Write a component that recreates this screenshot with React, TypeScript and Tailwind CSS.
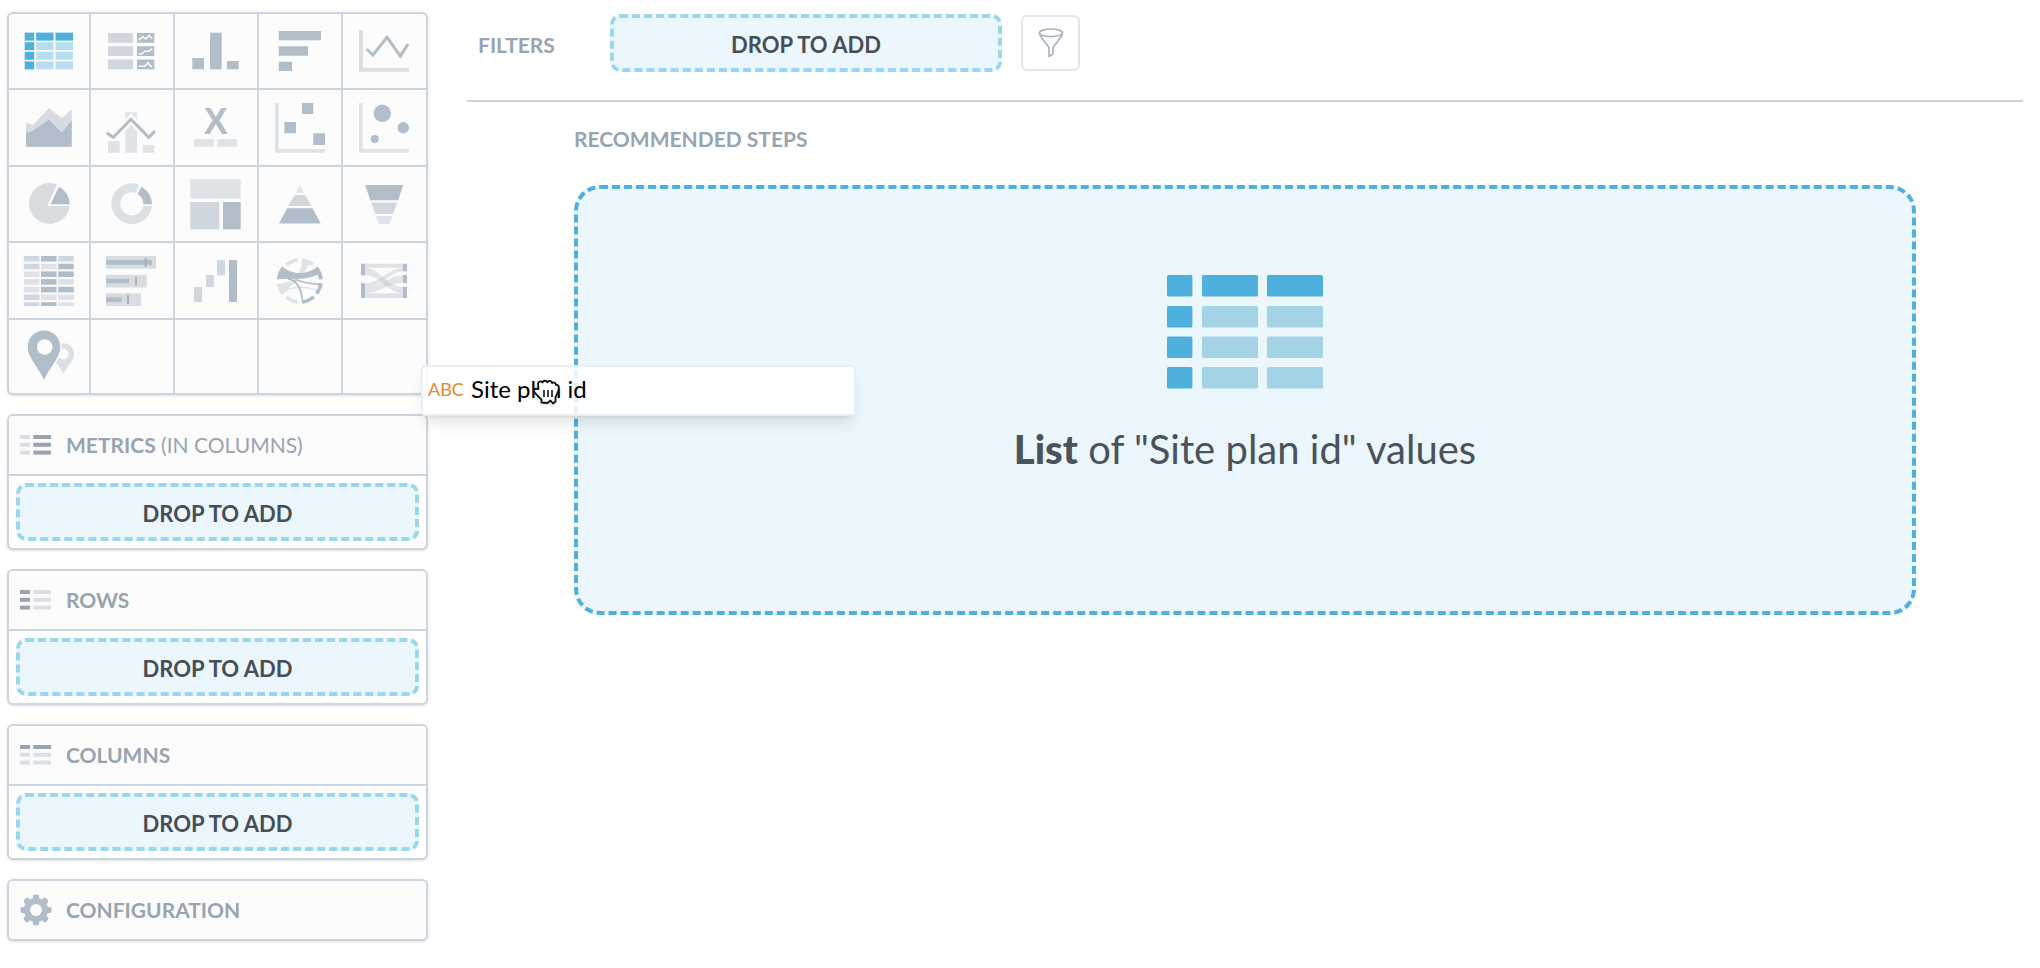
import type { ReactNode } from 'react'

const DARK = '#b1bdc8'
const MID = '#d0d7df'
const LIGHT = '#dfe3e7'
const GREY = '#d8dbe0'
const CELL = '#fcfcfc'

interface ChartType {
  name: string
  art?: ReactNode
}

const pivotRows = [
  [MID, DARK, MID],
  [MID, LIGHT, DARK],
  [LIGHT, DARK, DARK],
  [LIGHT, DARK, LIGHT],
  [LIGHT, DARK, DARK],
  [MID, LIGHT, LIGHT],
  [MID, DARK, LIGHT],
]

const chartTypes: ChartType[] = [
  {
    name: 'Table',
    art: (
      <>
        {[8.6, 18.2, 27.8, 37.4].map((y, i) => (
          <g key={y}>
            <rect x="1.7" y={y} width="9.5" height="8" fill="#4fb0de" />
            <rect x="13.2" y={y} width="17.3" height="8" fill={i === 0 ? '#4fb0de' : '#b7def0'} />
            <rect x="32.5" y={y} width="17.5" height="8" fill={i === 0 ? '#4fb0de' : '#b7def0'} />
          </g>
        ))}
      </>
    ),
  },
  {
    name: 'Sparkline table',
    art: (
      <>
        {[9, 22.2, 35.5].map((y) => (
          <g key={y}>
            <rect x="3" y={y} width="25" height="9.8" fill={MID} />
            <rect x="32" y={y} width="17.3" height="9.8" fill={DARK} />
          </g>
        ))}
        <g fill="none" stroke={CELL} strokeWidth="1.6">
          <path d="M33.7 16 38 12.7 40.7 15 44.3 11.4 47.3 14.8" />
          <path d="M33.7 30H36.5L39.7 27.2H44L47.3 24.5" />
          <path d="M33.7 42.2H39.7L43 38.7 45.5 42.2H47.3" />
        </g>
      </>
    ),
  },
  {
    name: 'Column chart',
    art: <path fill={DARK} d="M3.3 34H15V45.3H3.3zM21 8.7H32.7V45.3H21zM38 37H49.7V45.3H38z" />,
  },
  {
    name: 'Bar chart',
    art: <path fill={DARK} d="M5.7 7H48V16.3H5.7zM5.7 22.2H35V31.7H5.7zM5.7 37.7H19V47H5.7z" />,
  },
  {
    name: 'Line chart',
    art: (
      <>
        <path fill="#dbdfe4" d="M2 6H6V44H52V47.7H2z" />
        <path fill="none" stroke={DARK} strokeWidth="3" d="M9.7 25 16 31 30 13.3 43.3 32 51 20" />
      </>
    ),
  },
  {
    name: 'Area chart',
    art: (
      <>
        <path fill={GREY} d="M3 22.3 9.7 25.3 26 8.3 39 18 48.7 9.3V46.7H3z" />
        <path fill={DARK} d="M3 32.7 9.7 31 26 19.7 39 32.7 48.7 20.3V46.7H3z" />
      </>
    ),
  },
  {
    name: 'Combo chart',
    art: (
      <>
        <path fill={LIGHT} d="M3 41H14.7V52.7H3zM20.3 12.3H32V52.7H20.3zM37.7 45H49.3V52.7H37.7z" />
        <path fill="none" stroke={CELL} strokeWidth="8" d="M8.3 37.7 26 19.3 43.7 38" />
        <path fill="none" stroke={DARK} strokeWidth="3" d="M1.7 33 8.3 37.3 26 19.3 43.7 37.3 50 31" />
      </>
    ),
  },
  {
    name: 'Headline',
    art: (
      <>
        <text x="26.7" y="33.5" textAnchor="middle" fontSize="36" fill={DARK} className="font-['Liberation_Sans',sans-serif] font-bold">
          X
        </text>
        <path fill={LIGHT} d="M5 39H24.7V46.7H5zM28.3 39H47.7V46.7H28.3z" />
      </>
    ),
  },
  {
    name: 'Scatter plot',
    art: (
      <>
        <path fill={LIGHT} d="M2 3H5.7V49H52V52.7H2z" />
        <path fill={DARK} d="M29 3H40.3V14H29zM11.3 22H23V33.3H11.3zM40.3 33.3H52V45H40.3z" />
      </>
    ),
  },
  {
    name: 'Bubble chart',
    art: (
      <>
        <path fill={LIGHT} d="M2 3H5.7V49H52V52.7H2z" />
        <g fill={DARK}>
          <circle cx="25.3" cy="13.3" r="8.7" />
          <circle cx="46.3" cy="27.7" r="5.7" />
          <circle cx="17.7" cy="39" r="4" />
        </g>
      </>
    ),
  },
  {
    name: 'Pie chart',
    art: (
      <>
        <path fill={GREY} d="M24.3 29H46.6A20.4 20.4 0 1 1 33.9 7.5z" />
        <path fill={DARK} d="M27.5 27.3 36 9.7A20.4 20.4 0 0 1 46.7 27.3z" />
      </>
    ),
  },
  {
    name: 'Donut chart',
    art: (
      <>
        <path fill="#dbe0e5" d="M47 29A20.4 20.4 0 1 1 34 7.6L31 16A11.6 11.6 0 1 0 38.2 29z" />
        <path fill={DARK} d="M47 27.3A20.4 20.4 0 0 0 36.3 9.8L32.7 17A11.6 11.6 0 0 1 38.4 27.3z" />
      </>
    ),
  },
  {
    name: 'Treemap',
    art: (
      <>
        <rect x="1.3" y="2" width="50.4" height="19.7" fill={LIGHT} />
        <rect x="1.3" y="25" width="29" height="27.3" fill={MID} />
        <rect x="34" y="25" width="17.7" height="27.3" fill={DARK} />
      </>
    ),
  },
  {
    name: 'Pyramid chart',
    art: (
      <>
        <path fill={LIGHT} d="M26.7 8.3 31 15.7H22.7z" />
        <path fill={MID} d="M21.7 18H32.3L38.3 29H15.3z" />
        <path fill={DARK} d="M14.2 31.3H39.5L47.7 46.5H6z" />
      </>
    ),
  },
  {
    name: 'Funnel chart',
    art: (
      <>
        <path fill={DARK} d="M8 8H46.3L41 23.3H13.4z" />
        <path fill={MID} d="M14.2 25.5H40.2L36 37H18.3z" />
        <path fill={LIGHT} d="M19 39H35.3L32.5 46.7H21.7z" />
      </>
    ),
  },
  {
    name: 'Heatmap',
    art: (
      <>
        {pivotRows.map((row, i) => (
          <g key={i}>
            {row.map((fill, j) => (
              <rect key={j} x={0.8 + j * 17.2} y={3 + i * 7.7} width="15.6" height={i === 6 ? 3.8 : 5.6} fill={fill} />
            ))}
          </g>
        ))}
      </>
    ),
  },
  {
    name: 'Bullet chart',
    art: (
      <>
        <path fill={GREY} d="M1 3H51V15.7H1zM1 21.7H41.7V34.4H1zM1 40.3H36V53H1z" />
        <path fill={DARK} d="M1 7H47V11.7H1zM1 25.7H24.3V30.3H1zM1 44.3H16.7V49H1z" />
        <path fill="#a3b0bd" d="M39.7 5H41.7V13.7H39.7zM30 23.7H32V32.3H30zM22 42.3H24V51H22z" />
      </>
    ),
  },
  {
    name: 'Waterfall chart',
    art: (
      <>
        <path fill={MID} d="M5 34H13V49H5zM17 22H25V34H17zM28 7H36V22.3H28z" />
        <rect x="40" y="7" width="8" height="42" fill={DARK} />
      </>
    ),
  },
  {
    name: 'Dependency wheel',
    art: (
      <>
        <g fill="none" stroke={LIGHT} strokeWidth="3.4">
          <path d="M13.5 12A21.3 21.3 0 0 1 25 6.8" />
          <path d="M13.5 44A21.3 21.3 0 0 0 25 49.2" />
        </g>
        <path fill={LIGHT} d="M28.7 5A23 23 0 0 1 41 10.3L38.8 13A18 18 0 0 0 36 11.4Q31.5 16 31 23L23.5 22.5Q29 16 28.7 9z" />
        <path fill={LIGHT} d="M4 30.5Q14 30.2 25 26.5 17 34 9 42A23 23 0 0 1 4 30.5z" />
        <path fill="none" stroke={LIGHT} strokeWidth="1.6" d="M10 39Q25 30 46 38" />
        <path fill={DARK} d="M9 13.5Q17 20 26.7 20.3 37 20 44.7 13.5A23 23 0 0 1 49.7 26.3H46L44.8 21.5Q34 26.5 22 25.8 12 25.3 4 26.3A23 23 0 0 1 9 13.5z" />
        <path fill="none" stroke={DARK} strokeWidth="1.8" d="M15 25.5Q28 28 29.8 50M22 26.5Q32 30.5 47 31.5" />
        <path fill="none" stroke={DARK} strokeWidth="3.4" d="M29.5 49.2A21.3 21.3 0 0 0 40.7 43.8M43.5 40.8A21.3 21.3 0 0 0 48 30.3" />
      </>
    ),
  },
  {
    name: 'Sankey chart',
    art: (
      <>
        <path fill={LIGHT} d="M8 10.7H46V14.7H8zM8 40.3H46V45H8z" />
        <g fill={DARK} fillOpacity="0.36">
          <path d="M8 14.7C24 16 30 34 46 34V40.3C28 39 24 22.3 8 22.3z" />
          <path d="M8 30.5C24 30 30 16 46 14.7V18.3C30 20 24 35.5 8 36z" />
          <path d="M8 36C24 35 30 22.5 46 22.3V29.8C30 30 24 40 8 40.3z" />
        </g>
        <path fill={DARK} d="M4 10.7H8V22.3H4zM4 30H8V45H4zM46 10.7H50V18.3H46zM46 22H50V30H46zM46 33.7H50V45H46z" />
      </>
    ),
  },
  {
    name: 'Geo chart',
    art: (
      <>
        <path fillRule="evenodd" fill="#dbdfe6" d="M40.3 13.2A10.6 10.6 0 0 1 51 24C51 31 44 36 40.3 44 37 36 29.7 31 29.7 24A10.6 10.6 0 0 1 40.3 13.2zM40.3 18.8A5.3 5.3 0 1 0 40.3 29.4 5.3 5.3 0 1 0 40.3 18.8z" />
        <path
          fill={DARK}
          stroke={CELL}
          strokeWidth="3"
          paintOrder="stroke"
          d="M21 0.5A16.3 16.3 0 0 1 37.3 17C37.3 28 26 38 21 50 16 38 4.7 28 4.7 17A16.3 16.3 0 0 1 21 0.5z"
        />
        <circle cx="21.7" cy="17" r="7.8" fill={CELL} />
      </>
    ),
  },
  { name: 'Empty slot 1' },
  { name: 'Empty slot 2' },
  { name: 'Empty slot 3' },
  { name: 'Empty slot 4' },
]

function ChartPicker() {
  return (
    <div className="grid grid-cols-[80px_82px_82px_82px_1fr] grid-rows-[74px_75px_74px_75px_73px] gap-0.5 overflow-hidden rounded-md border-2 border-[#cbd5e0] bg-[#cbd5e0] shadow-sm">
      {chartTypes.map((type) =>
        type.art ? (
          <button key={type.name} aria-label={type.name} className="flex items-start bg-[#fcfcfc] pt-[10px] pl-[14px]">
            <svg viewBox="0 0 54 54" className="size-[54px]">
              {type.art}
            </svg>
          </button>
        ) : (
          <div key={type.name} className="bg-[#fcfcfc]" />
        )
      )}
    </div>
  )
}

function DropZone() {
  return (
    <div className="flex h-[58px] w-full items-center justify-center rounded-[10px] border-4 border-dashed border-[#9ad7ec] bg-[#ebf6fd] pt-1 text-[22px] leading-7 font-bold text-[#464e56]">
      DROP TO ADD
    </div>
  )
}

// Three line list glyph, `on` tells which of the six bars are highlighted
function ListIcon({ on }: { on: 'right' | 'left' | 'top' }) {
  return (
    <svg viewBox="0 0 31 20" className="h-5 w-[31px]">
      {[0, 1, 2].map((row) => {
        const left = on === 'left' || (on === 'top' && row === 0)
        const right = on === 'right' || (on === 'top' && row === 0)
        return (
          <g key={row}>
            <rect x="0" y={row * 7.8} width="10" height="4" fill={left ? '#98a4b0' : '#dbdfe5'} />
            <rect x="13.3" y={row * 7.8} width="17.7" height="4" fill={right ? '#98a4b0' : '#dbdfe5'} />
          </g>
        )
      })}
    </svg>
  )
}

function GearIcon() {
  return (
    <svg viewBox="-16 -16 32 32" className="size-8">
      <g fill={DARK}>
        {[0, 45, 90, 135].map((a) => (
          <rect key={a} x="-3.2" y="-15.6" width="6.4" height="31.2" rx="2.4" transform={`rotate(${a})`} />
        ))}
        <circle r="12" />
      </g>
      <circle r="6" fill={CELL} />
    </svg>
  )
}

interface BucketProps {
  icon: ReactNode
  title: string
  note?: string
  children?: ReactNode
}

function Bucket({ icon, title, note, children }: BucketProps) {
  return (
    <section className="overflow-hidden rounded-md border-2 border-[#cbd5e0] bg-white shadow-sm">
      <h2 className="flex h-[58px] items-center bg-[#fcfcfc] pl-[11px] text-[21px] leading-7 text-[#98a4b0]">
        <span className="flex w-[46px] items-center">{icon}</span>
        <span>
          <span className="font-bold">{title}</span>
          {note && <span> {note}</span>}
        </span>
      </h2>
      {children && <div className="border-t-2 border-[#cbd5e0] p-[7px]">{children}</div>}
    </section>
  )
}

function FunnelIcon() {
  return (
    <svg viewBox="0 0 26 30" className="h-[30px] w-[26px]" fill="none" stroke="#a9b5c2" strokeWidth="1.7" strokeLinejoin="round">
      <ellipse cx="13" cy="4.8" rx="11.6" ry="3.8" />
      <path d="M1.4 5.5Q2 8 11 19.5V28.5L15 26V19.5Q24 8 24.6 5.5" />
    </svg>
  )
}

function ListPreviewIcon() {
  return (
    <svg viewBox="0 0 156 114" className="h-[114px] w-[156px]">
      {[0, 31, 61.5, 92].map((y, i) => (
        <g key={y}>
          <rect x="0" y={y} width="25.4" height="21.6" rx="1.5" fill="#4fb0de" />
          <rect x="35" y={y} width="56" height="21.6" rx="1.5" fill={i === 0 ? '#4fb0de' : '#a3d3e4'} />
          <rect x="100" y={y} width="56" height="21.6" rx="1.5" fill={i === 0 ? '#4fb0de' : '#a3d3e4'} />
        </g>
      ))}
    </svg>
  )
}

function GrabCursor() {
  return (
    <svg viewBox="0 0 28 26" className="absolute top-3 left-[109px] h-[26px] w-[28px] drop-shadow">
      <path
        fill="#fff"
        stroke="#111"
        strokeWidth="1.8"
        strokeLinejoin="round"
        d="M6 5C6 2.500 9 1.500 10.500 3.500 11.500 1.200 14.500 1.200 15.300 3.300 16.500 1.200 19.500 1.500 20 4 22 2.800 24 4 24 6 26 5.500 27 7 26.800 9.500 26.500 13 25 15 23.500 18V22.500L21 24.500 18.500 21.500 15.500 24 9.500 23.500V20.500C6.500 18 5 16 3 14 1 11.500 1.500 9 6.500 10z"
      />
      <path stroke="#111" strokeWidth="1.6" d="M12 11V18M16 11V18M20 11V18" />
    </svg>
  )
}

export default function App() {
  return (
    <div className="relative flex min-h-screen gap-[39px] bg-white pt-3 pr-[17px] pl-[7px] font-['Lato',sans-serif]">
      {/* Sidebar */}
      <aside className="flex w-[421px] shrink-0 flex-col gap-[19px]">
        <ChartPicker />
        <Bucket icon={<ListIcon on="right" />} title="METRICS" note="(IN COLUMNS)">
          <DropZone />
        </Bucket>
        <Bucket icon={<ListIcon on="left" />} title="ROWS">
          <DropZone />
        </Bucket>
        <Bucket icon={<ListIcon on="top" />} title="COLUMNS">
          <DropZone />
        </Bucket>
        <Bucket icon={<GearIcon />} title="CONFIGURATION" />
      </aside>

      {/* Canvas */}
      <main className="min-w-0 flex-1">
        <div className="flex h-[90px] items-start border-b-2 border-[#cbd5e0] pt-0.5 pl-[11px]">
          <div className="flex h-[58px] items-center">
            <h2 className="w-[132px] pt-1 text-[21px] leading-7 font-bold text-[#98a4b0]">FILTERS</h2>
            <div className="w-[392px]">
              <DropZone />
            </div>
            <button aria-label="Add filter" className="ml-[19px] flex h-[56px] w-[59px] items-center justify-center rounded-md border-2 border-[#e3e6ec] bg-white">
              <FunnelIcon />
            </button>
          </div>
        </div>

        <div className="px-[107px] pt-[23px]">
          <h2 className="text-[21px] leading-7 font-bold text-[#98a4b0]">RECOMMENDED STEPS</h2>
          <div className="mt-8 flex h-[430px] flex-col items-center rounded-[26px] border-4 border-dashed border-[#4fb0de] bg-[#ebf6fd] pt-[86px]">
            <ListPreviewIcon />
            <p className="mt-[35px] text-[40px] leading-[50px] text-[#4a525b]">
              <b className="font-black">List</b> of "Site plan id" values
            </p>
          </div>
        </div>
      </main>

      {/* Dragged attribute */}
      <div className="absolute top-[365px] left-[421px] flex h-[51px] w-[435px] items-center rounded-sm border-2 border-[#e6ebf2]/80 bg-white/85 pb-1 pl-[5px] shadow-lg">
        <span className="w-[43px] text-[18px] leading-7 text-[#e08a33]">ABC</span>
        <span className="text-[24px] leading-7 text-black">Site plan id</span>
        <GrabCursor />
      </div>
    </div>
  )
}
